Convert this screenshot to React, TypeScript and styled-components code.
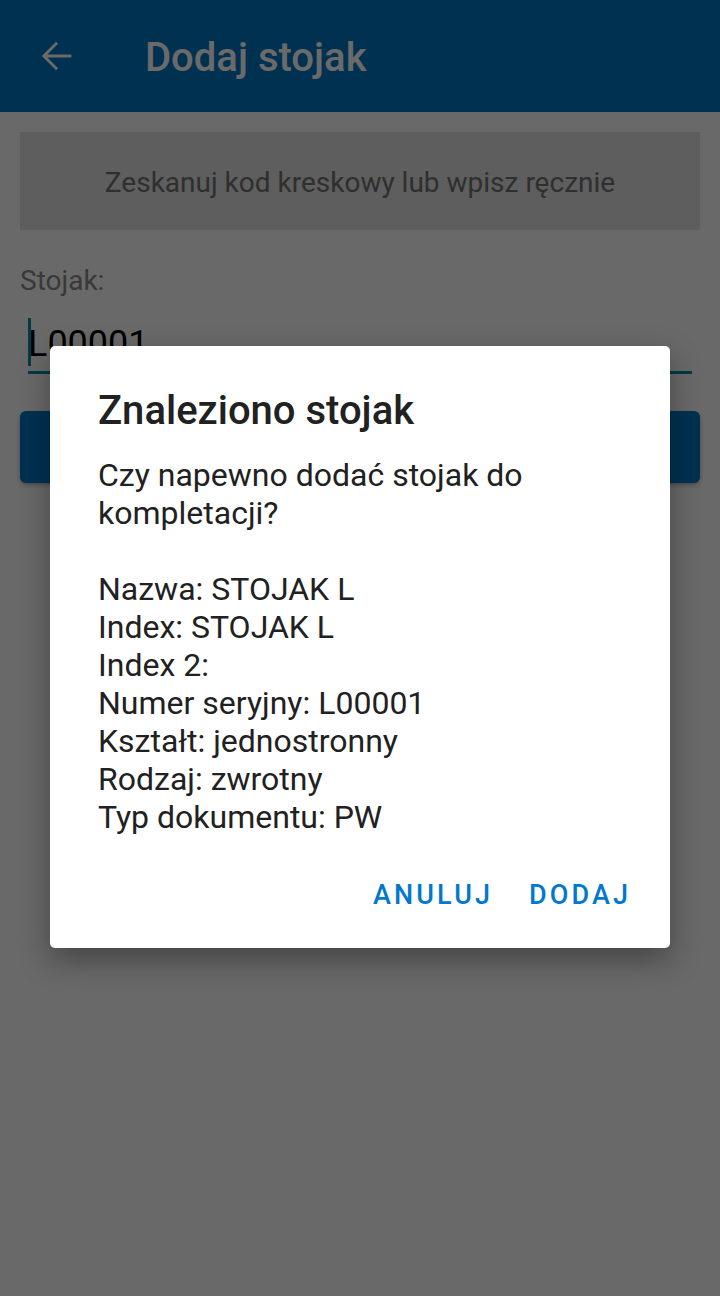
import React from "react";
import styled, { createGlobalStyle } from "styled-components";

const GlobalStyle = createGlobalStyle`
    html, body {
        margin: 0;
        padding: 0;
        background: #ffffff;
    }
    body {
        font-family: Roboto, "Noto Sans", sans-serif;
    }
`;

const ScreenSC = styled.div`
    position: relative;
    width: 720px;
    height: 1296px;
    overflow: hidden;
    background: #fdfdfd;
`;

const AppBarSC = styled.div`
    height: 112px;
    background: #0076c4;
    display: flex;
    align-items: center;
    padding: 0 0 0 33px;
    box-sizing: border-box;
    color: #ffffff;
`;

const BackSC = styled.div`
    width: 46px;
    height: 46px;
    display: flex;
    align-items: center;
    justify-content: center;
    margin-right: 66px;
`;

const TitleSC = styled.div`
    font-size: 40px;
    font-weight: 500;
    margin-top: 2px;
`;

const ContentSC = styled.div`
    padding: 20px;
    display: flex;
    flex-direction: column;
`;

const HintSC = styled.div`
    height: 98px;
    background: #e2e2e2;
    color: #727272;
    font-size: 28px;
    display: flex;
    align-items: center;
    justify-content: center;
    padding-top: 2px;
    box-sizing: border-box;
`;

const LabelSC = styled.div`
    margin-top: 34px;
    font-size: 28px;
    line-height: 33px;
    color: #8a8a8a;
`;

const InputSC = styled.div`
    position: relative;
    margin: 14px 8px 0 8px;
    height: 63px;
    border-bottom: 3px solid #0a8aa6;
    font-size: 36px;
    color: #000000;
    display: flex;
    align-items: center;
    padding-top: 6px;
    box-sizing: border-box;
`;

const CursorSC = styled.span`
    position: absolute;
    left: 0;
    top: 7px;
    width: 3px;
    height: 48px;
    background: #0a8aa6;
`;

const ButtonSC = styled.div`
    margin-top: 37px;
    height: 72px;
    border-radius: 6px;
    background: #0076c4;
    box-shadow: 0 2px 4px rgba(0, 0, 0, 0.3);
`;

const ScrimSC = styled.div`
    position: absolute;
    inset: 0;
    background: rgba(0, 0, 0, 0.584);
`;

const DialogSC = styled.div`
    position: absolute;
    left: 50px;
    top: 346px;
    width: 620px;
    height: 602px;
    background: #ffffff;
    border-radius: 5px;
    box-shadow: 0 12px 30px rgba(0, 0, 0, 0.35);
    padding: 38px 48px 0 48px;
    box-sizing: border-box;
    display: flex;
    flex-direction: column;
`;

const DialogTitleSC = styled.div`
    font-size: 40px;
    font-weight: 500;
    color: #212121;
    line-height: 54px;
`;

const DialogBodySC = styled.div`
    margin-top: 18px;
    font-size: 32px;
    line-height: 38px;
    color: #212121;
    white-space: pre-line;
`;

const ActionsSC = styled.div`
    margin-top: 35px;
    display: flex;
    justify-content: flex-end;
    gap: 36px;
    margin-right: -9px;
`;

const ActionSC = styled.div`
    font-size: 27px;
    font-weight: 500;
    letter-spacing: 3.1px;
    color: #0078d0;
    line-height: 48px;
`;

const BackArrow = () => (
    <svg width="46" height="46" viewBox="0 0 24 24">
        <path d="M20 11.25H7.5l5.6-5.6-1.05-1.05L4.6 12l7.45 7.4 1.05-1.05-5.6-5.6H20v-1.5z" fill="#ffffff" />
    </svg>
);

const details = [
    "Czy napewno dodać stojak do",
    "kompletacji?",
    "",
    "Nazwa: STOJAK L",
    "Index: STOJAK L",
    "Index 2:",
    "Numer seryjny: L00001",
    "Kształt: jednostronny",
    "Rodzaj: zwrotny",
    "Typ dokumentu: PW",
];

export default function App() {
    return (
        <ScreenSC>
            <GlobalStyle />
            <AppBarSC>
                <BackSC>
                    <BackArrow />
                </BackSC>
                <TitleSC>Dodaj stojak</TitleSC>
            </AppBarSC>
            <ContentSC>
                <HintSC>Zeskanuj kod kreskowy lub wpisz ręcznie</HintSC>
                <LabelSC>Stojak:</LabelSC>
                <InputSC>
                    <CursorSC />
                    L00001
                </InputSC>
                <ButtonSC />
            </ContentSC>
            <ScrimSC />
            <DialogSC>
                <DialogTitleSC>Znaleziono stojak</DialogTitleSC>
                <DialogBodySC>{details.join("\n")}</DialogBodySC>
                <ActionsSC>
                    <ActionSC>ANULUJ</ActionSC>
                    <ActionSC>DODAJ</ActionSC>
                </ActionsSC>
            </DialogSC>
        </ScreenSC>
    );
}
